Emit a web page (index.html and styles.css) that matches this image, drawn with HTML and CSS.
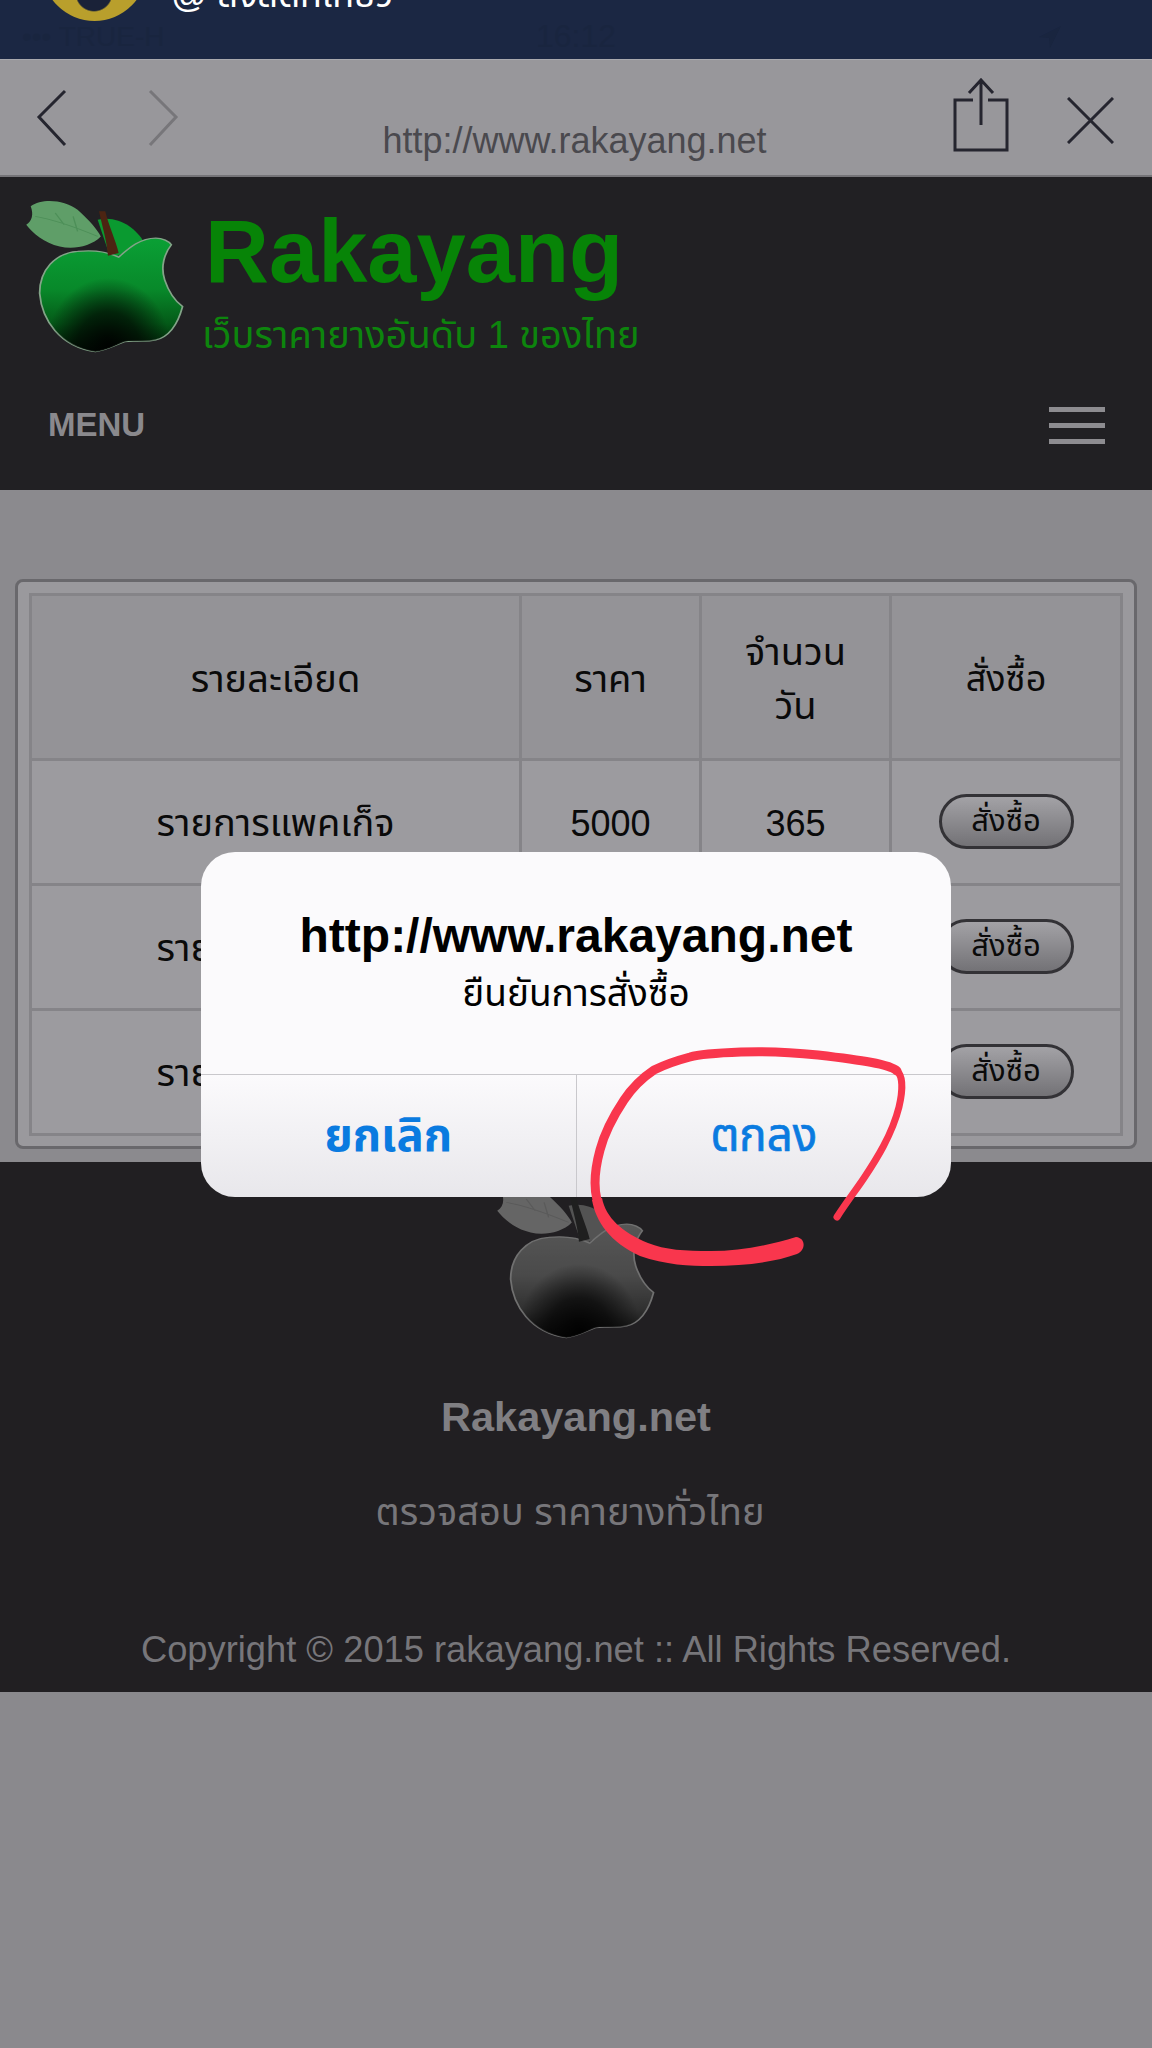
FILE: index.html
```html
<!DOCTYPE html>
<html lang="th">
<head>
    <meta charset="UTF-8">
    <meta name="viewport" content="width=device-width, initial-scale=1.0">
    <title>Rakayang</title>
    <link rel="stylesheet" href="styles.css">
</head>
<body>
    <svg class="defs" width="0" height="0">
        <defs>
            <linearGradient id="body_fill" x1="0" y1="0" x2="0" y2="1">
                <stop offset="0" stop-color="#0aa035"/>
                <stop offset="0.45" stop-color="#08892a"/>
                <stop offset="0.75" stop-color="#045a18"/>
                <stop offset="1" stop-color="#011a06"/>
            </linearGradient>
            <radialGradient id="body_shade" cx="0.48" cy="0.95" r="0.6" gradientTransform="translate(0.48 0.95) scale(0.72 1) translate(-0.48 -0.95)">
                <stop offset="0" stop-color="#000" stop-opacity="0.95"/>
                <stop offset="0.5" stop-color="#000" stop-opacity="0.65"/>
                <stop offset="1" stop-color="#000" stop-opacity="0"/>
            </radialGradient>
            <symbol id="apple" viewBox="50 85 365 470" preserveAspectRatio="none">
                <path d="M215 150C260 135 300 175 318 215L245 270Z" fill="#0a9a30"/>
                <path d="M170 245C120 250 85 300 85 370C90 450 130 530 210 545C235 540 255 525 275 515C295 510 320 518 345 510C375 500 395 460 405 410C390 395 375 370 365 330C355 290 365 250 380 225C375 215 360 205 345 205C310 205 285 235 262 262C235 245 205 240 170 245Z" fill="url(#body_fill)" stroke="#83a488" stroke-width="4"/>
                <path d="M170 245C120 250 85 300 85 370C90 450 130 530 210 545C235 540 255 525 275 515C295 510 320 518 345 510C375 500 395 460 405 410C390 395 375 370 365 330C355 290 365 250 380 225C375 215 360 205 345 205C310 205 285 235 262 262C235 245 205 240 170 245Z" fill="url(#body_shade)"/>
                <path d="M55 165C68 155 72 135 65 110C90 85 140 90 170 120C195 150 215 180 222 200C200 230 160 240 130 230C95 220 70 190 55 165Z" fill="#5f9e68"/>
                <path d="M75 140C120 150 170 175 215 200M120 130L140 165M160 140L170 185" stroke="#4d8f58" stroke-width="3" fill="none"/>
                <path d="M218 125L232 125C240 170 255 210 262 250L238 258C235 210 225 170 218 125Z" fill="#4c2412"/>
            </symbol>
        </defs>
    </svg>

    <div class="topbar">
        <div class="account">
            <div class="medal"></div>
            <span class="account_name">@ สงสัดกิเกียว</span>
        </div>
        <div class="status">
            <span>••• TRUE-H</span>
            <span class="status_time">16:12</span>
            <svg class="status_arrow" width="30" height="30" viewBox="0 0 30 30"><path d="M26 4L4 15L14 16L15 26Z" fill="#19253f"/></svg>
        </div>
    </div>

    <div class="browser">
        <div class="browser_nav">
            <svg width="40" height="60" viewBox="0 0 40 60"><path d="M30 2L4 28L30 56" class="ico_line"/></svg>
            <svg width="40" height="60" viewBox="0 0 40 60"><path d="M8 2L34 28L8 56" class="ico_line ico_off"/></svg>
        </div>
        <div class="browser_url">http://www.rakayang.net</div>
        <div class="browser_tools">
            <svg width="56" height="74" viewBox="0 0 56 74"><path d="M20 22H2V72H54V22H35M28 2V47M16 15L28 2L40 15" class="ico_line"/></svg>
            <svg width="47" height="47" viewBox="0 0 47 47"><path d="M1 1L46 46M46 1L1 46" class="ico_line"/></svg>
        </div>
    </div>

    <div class="site_head">
        <div class="brand">
            <svg class="logo"><use href="#apple"/></svg>
            <div class="brand_text">
                <div class="brand_name">Rakayang</div>
                <div class="brand_sub">เว็บราคายางอันดับ 1 ของไทย</div>
            </div>
        </div>
        <div class="site_menu">
            <span>MENU</span>
            <div class="burger"><i></i><i></i><i></i></div>
        </div>
    </div>

    <div class="main">
        <div class="panel">
            <table class="price">
                <thead>
                    <tr>
                        <th class="col_a">รายละเอียด</th>
                        <th class="col_b">ราคา</th>
                        <th class="col_c">จำนวน<br>วัน</th>
                        <th class="col_d">สั่งซื้อ</th>
                    </tr>
                </thead>
                <tbody>
                    <tr>
                        <td>รายการแพคเก็จ</td>
                        <td class="num">5000</td>
                        <td class="num">365</td>
                        <td><span class="buy">สั่งซื้อ</span></td>
                    </tr>
                    <tr>
                        <td>รายการแพคเก็จ</td>
                        <td></td>
                        <td></td>
                        <td><span class="buy">สั่งซื้อ</span></td>
                    </tr>
                    <tr>
                        <td>รายการแพคเก็จ</td>
                        <td></td>
                        <td></td>
                        <td><span class="buy">สั่งซื้อ</span></td>
                    </tr>
                </tbody>
            </table>
        </div>
    </div>

    <div class="foot">
        <svg class="logo foot_logo"><use href="#apple"/></svg>
        <div class="foot_name">Rakayang.net</div>
        <div class="foot_sub">ตรวจสอบ ราคายางทั่วไทย</div>
        <div class="foot_copy">Copyright © 2015 rakayang.net :: All Rights Reserved.</div>
    </div>

    <div class="dialog">
        <div class="dialog_body">
            <div class="dialog_title">http://www.rakayang.net</div>
            <div class="dialog_msg">ยืนยันการสั่งซื้อ</div>
        </div>
        <div class="dialog_btns">
            <div class="dialog_btn">ยกเลิก</div>
            <div class="dialog_btn">ตกลง</div>
        </div>
    </div>

    <svg class="scribble" width="1152" height="2048" viewBox="0 0 1152 2048">
        <path d="M837 1217C848 1200 856 1190 864 1178C876 1160 892 1135 899 1107C903 1090 903 1076 897 1071" stroke-width="7"/>
        <path d="M897 1071C890 1064 860 1060 818 1055C790 1052 765 1051 741 1052C715 1053 700 1054 690 1057C675 1061 664 1065 654 1070C642 1078 632 1088 624 1100C612 1118 604 1135 600 1150C594 1172 594 1188 597 1200" stroke-width="9"/>
        <path class="scribble_end" d="M592 1200C596 1222 610 1242 640 1256C665 1265 690 1266 711 1266C745 1266 775 1262 797 1254C806 1250 806 1238 796 1237C770 1245 740 1251 711 1251C685 1251 665 1250 648 1243C622 1232 606 1218 602 1198Z"/>
    </svg>
</body>
</html>
```

FILE: styles.css
```css
*{
    margin: 0;
    padding: 0;
    box-sizing: border-box;
}

body{
    width: 1152px;
    min-height: 2048px;
    position: relative;
    overflow: hidden;
    background-color: #8a898d;
    font-family: "Liberation Sans", "Noto Sans Thai", "Noto Sans", sans-serif;
}

.defs{
    display: block;
}

.topbar{
    height: 59px;
    overflow: hidden;
    background-color: #1b2743;
}

.account{
    height: 21px;
    padding-left: 42px;
    display: flex;
    align-items: flex-end;
    gap: 24px;
}

.medal{
    width: 105px;
    height: 105px;
    flex: none;
    border-radius: 50%;
    background:
        radial-gradient(circle 19px at 52px 77px, #1a2238 92%, transparent),
        radial-gradient(circle, #b99f2c 0 70%, #d0b02a 80%, #edd01e 90%, #e3bf1a 100%);
}

.account_name{
    color: #fff;
    font-size: 36px;
    line-height: 42px;
    margin-bottom: 5px;
}

.status{
    height: 30px;
    margin-top: -3px;
    padding: 0 22px;
    display: grid;
    grid-template-columns: 1fr auto 1fr;
    align-items: center;
    color: #19253f;
    font-size: 28px;
}

.status_time{
    font-size: 32px;
}

.status_arrow{
    justify-self: end;
    margin-right: 65px;
}

.browser{
    height: 118px;
    padding: 0 38px 0 35px;
    display: grid;
    grid-template-columns: 1fr auto 1fr;
    background-color: #98979b;
    border-top: 1px solid #a9a9ae;
    border-bottom: 2px solid #757478;
}

.browser_nav{
    display: flex;
    gap: 67px;
    padding-top: 29px;
}

.browser_url{
    color: #4a494e;
    font-size: 36px;
    line-height: 42px;
    padding-top: 60px;
}

.browser_tools{
    display: flex;
    justify-content: flex-end;
    align-items: flex-start;
    gap: 58px;
    padding-top: 18px;
}

.browser_tools svg:last-child{
    margin-top: 19px;
}

.ico_line{
    fill: none;
    stroke: #25252f;
    stroke-width: 3;
}

.ico_off{
    stroke: #77767a;
}

.site_head{
    height: 313px;
    background-color: #212023;
}

.brand{
    display: flex;
    padding: 21px 0 0 24px;
}

.logo{
    width: 163px;
    height: 157px;
    flex: none;
}

.brand_text{
    margin-left: 18px;
}

.brand_name{
    color: #078407;
    font-size: 88.5px;
    font-weight: bold;
    line-height: 96px;
    margin-top: 6px;
}

.brand_sub{
    color: #0d850d;
    font-size: 38px;
    line-height: 42px;
    margin: 14px 0 0 -3px;
}

.site_menu{
    display: flex;
    justify-content: space-between;
    align-items: center;
    padding: 50px 47px 0 48px;
    color: #8a898d;
    font-size: 33px;
    font-weight: bold;
}

.burger{
    width: 56px;
    display: flex;
    flex-direction: column;
    gap: 11px;
}

.burger i{
    display: block;
    height: 5px;
    background-color: #8d8c90;
}

.main{
    height: 672px;
    padding: 89px 15px 0;
    background-color: #8b8a8e;
}

.panel{
    height: 570px;
    padding: 11px;
    border: 3px solid #69686c;
    border-radius: 8px;
    background-color: #9a999d;
}

.price{
    width: 1094px;
    height: 541px;
    table-layout: fixed;
    border-collapse: collapse;
    color: #0a0a0a;
    font-size: 38px;
    text-align: center;
}

.price th,
.price td{
    border: 3px solid #858488;
    font-weight: normal;
}

.price th{
    height: 165px;
    padding-top: 4px;
    line-height: 54px;
    background-color: #949397;
}

.price td{
    height: 125px;
    padding-top: 4px;
    background-color: #9c9b9f;
}

.price .num{
    font-size: 36px;
}

.col_a{
    width: 490px;
}

.col_b{
    width: 180px;
}

.col_c{
    width: 190px;
}

.price .col_d{
    font-size: 36px;
}

.buy{
    display: inline-block;
    width: 135px;
    height: 55px;
    margin-bottom: 6px;
    border: 3px solid #333236;
    border-radius: 28px;
    background: linear-gradient(#a3a2a6, #737276);
    font-size: 31px;
    line-height: 47px;
}

.foot{
    height: 530px;
    display: flex;
    flex-direction: column;
    align-items: center;
    background-color: #211f22;
}

.foot_logo{
    margin-top: 22px;
    filter: grayscale(1) brightness(0.72);
}

.foot_name{
    color: #807f83;
    font-size: 41.5px;
    font-weight: bold;
    margin-top: 52px;
}

.foot_sub{
    color: #77767a;
    font-size: 38px;
    margin-top: 44px;
    padding-right: 12px;
}

.foot_copy{
    color: #77767a;
    font-size: 36.3px;
    margin-top: 87px;
}

.dialog{
    position: absolute;
    left: 201px;
    top: 852px;
    width: 750px;
    height: 345px;
    display: flex;
    flex-direction: column;
    overflow: hidden;
    border-radius: 34px;
    background: linear-gradient(#fbfafc 0, #fbfafc 65%, #e8e7eb 100%);
}

.dialog_body{
    height: 222px;
    padding-top: 56px;
    text-align: center;
    color: #000;
}

.dialog_title{
    font-size: 48px;
    font-weight: bold;
    line-height: 56px;
}

.dialog_msg{
    font-size: 37px;
    line-height: 46px;
    margin-top: 7px;
}

.dialog_btns{
    flex: 1;
    display: flex;
    border-top: 1px solid #c9c8cc;
}

.dialog_btn{
    flex: 1;
    display: flex;
    justify-content: center;
    align-items: center;
    padding-top: 2px;
    color: #0a7be0;
    font-size: 45.5px;
    font-weight: bold;
}

.dialog_btn + .dialog_btn{
    border-left: 1px solid #c9c8cc;
    font-weight: normal;
    -webkit-text-stroke: 0.7px #0a7be0;
}

.scribble{
    position: absolute;
    left: 0;
    top: 0;
    fill: none;
    stroke: #f9364d;
    stroke-linecap: round;
    stroke-linejoin: round;
}

.scribble_end{
    fill: #f9364d;
    stroke: none;
}
```
